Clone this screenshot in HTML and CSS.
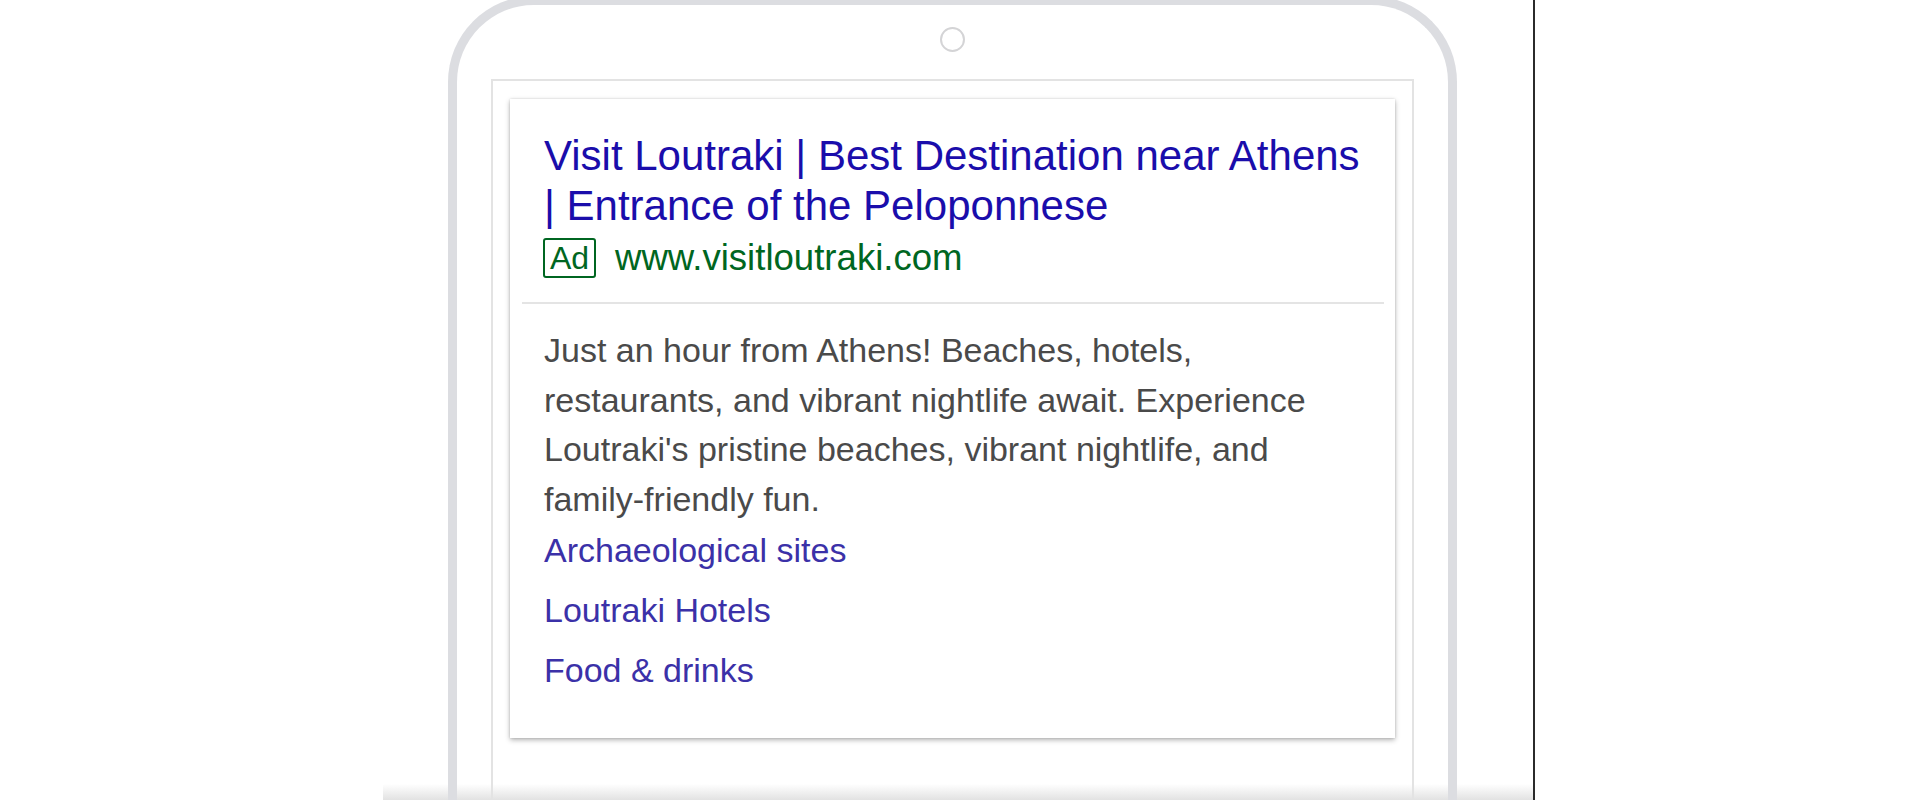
FILE: index.html
```html
<!DOCTYPE html>
<html lang="en">
<head>
<meta charset="utf-8">
<title>Visit Loutraki ad preview</title>
<link rel="stylesheet" href="styles.css">
</head>
<body>
  <div class="stage">
    <div class="phone">
      <div class="camera"></div>
      <div class="screen">
        <div class="ad-card">
          <div class="ad-head">
            <h1 class="ad-title">Visit Loutraki | Best Destination near Athens | Entrance of the Peloponnese</h1>
            <div class="ad-url-row">
              <span class="ad-badge">Ad</span>
              <span class="ad-url">www.visitloutraki.com</span>
            </div>
          </div>
          <div class="ad-divider"></div>
          <div class="ad-body">
            <p class="ad-desc">Just an hour from Athens! Beaches, hotels, restaurants, and vibrant nightlife await. Experience Loutraki's pristine beaches, vibrant nightlife, and family-friendly fun.</p>
            <ul class="sitelinks">
              <li>Archaeological sites</li>
              <li>Loutraki Hotels</li>
              <li>Food &amp; drinks</li>
            </ul>
          </div>
        </div>
      </div>
    </div>
  </div>
</body>
</html>
```
FILE: styles.css
```css
html, body {
  margin: 0;
  padding: 0;
  height: 800px;
  overflow: hidden;
  background: #ffffff;
}

body {
  font-family: "Liberation Sans", Arial, Helvetica, sans-serif;
}

.stage {
  margin-left: 383px;
  width: 1150px;
  height: 800px;
  border-right: 2px solid #2b2b2b;
  background: linear-gradient(to bottom, rgba(230, 230, 230, 0) 0, rgba(230, 230, 230, 0) 784px, #e2e2e2 800px);
  overflow: hidden;
}

.phone {
  margin-left: 65px;
  margin-top: -4px;
  width: 1009px;
  height: 900px;
  box-sizing: border-box;
  border: 9px solid #dcdde1;
  border-bottom: none;
  border-radius: 86px 86px 0 0;
  display: flex;
  flex-direction: column;
  align-items: center;
}

.camera {
  margin-top: 22px;
  width: 25px;
  height: 25px;
  box-sizing: border-box;
  border: 2px solid #d4d4d6;
  border-radius: 50%;
  flex: none;
}

.screen {
  align-self: stretch;
  margin: 27px 34px 0;
  border: 2px solid #e3e3e3;
  border-bottom: none;
  padding: 18px 17px 0;
  flex: 1;
}

.ad-card {
  background: #ffffff;
  box-shadow: 0 2px 5px rgba(0, 0, 0, 0.3), 0 0 2px rgba(0, 0, 0, 0.12);
}

.ad-head {
  padding: 32px 24px 24px 34px;
}

.ad-title {
  margin: 0;
  font-size: 42px;
  line-height: 50px;
  font-weight: normal;
  color: #1a0dab;
}

.ad-url-row {
  display: flex;
  align-items: center;
  gap: 19px;
  margin-top: 7px;
  height: 40px;
}

.ad-badge {
  margin-left: -1px;
  width: 53px;
  height: 40px;
  box-sizing: border-box;
  border: 2px solid #006621;
  border-radius: 3px;
  color: #006621;
  font-size: 32px;
  line-height: 36px;
  display: flex;
  align-items: center;
  justify-content: center;
}

.ad-url {
  font-size: 36.6px;
  line-height: 36px;
  color: #006621;
}

.ad-divider {
  height: 2px;
  margin: 0 11px 0 12px;
  background: #e4e4e4;
}

.ad-body {
  padding: 22px 24px 43px 34px;
}

.ad-desc {
  margin: 0;
  font-size: 34px;
  line-height: 49.7px;
  color: #4a4a4a;
}

.sitelinks {
  list-style: none;
  margin: 0;
  padding: 0;
  display: flex;
  flex-direction: column;
  gap: 10px;
}

.sitelinks li {
  font-size: 34px;
  line-height: 50px;
  color: #3b31a8;
}
```
